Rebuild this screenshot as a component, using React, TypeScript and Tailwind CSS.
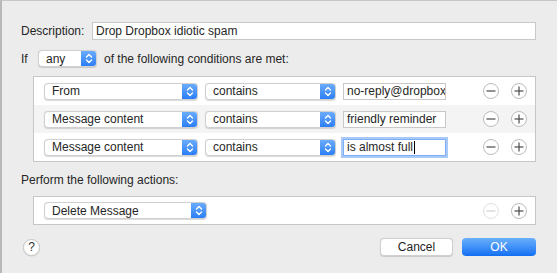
import React from "react";

const font = { fontFamily: "'Liberation Sans', Arial, sans-serif" };

function Chevrons() {
  return (
    <svg width="8" height="11" viewBox="0 0 8 11" fill="none" stroke="white" strokeWidth="1.4" strokeLinecap="round" strokeLinejoin="round">
      <path d="M1.5 4 L4 1.5 L6.5 4" />
      <path d="M1.5 7 L4 9.5 L6.5 7" />
    </svg>
  );
}

function PopUp({ label, width }: { label: string; width: string }) {
  return (
    <div className={`${width} h-[17px] flex items-stretch rounded-[4px] bg-white border border-[#d0d0d0] shadow-[0_0.5px_1px_rgba(0,0,0,0.15)] overflow-hidden`}>
      <div className="flex-1 flex items-center pl-[7px] text-[12px] text-[#262626] leading-none">{label}</div>
      <div className="w-[15px] flex items-center justify-center bg-gradient-to-b from-[#6aabfc] to-[#2a7ef6]">
        <Chevrons />
      </div>
    </div>
  );
}

function RoundBtn({ kind, disabled }: { kind: "minus" | "plus"; disabled?: boolean }) {
  const stroke = disabled ? "#d0d0d0" : "#4a4a4a";
  return (
    <div className={`w-[16px] h-[16px] rounded-full bg-white border ${disabled ? "border-[#e0e0e0]" : "border-[#bcbcbc]"} flex items-center justify-center`}>
      <svg width="10" height="10" viewBox="0 0 10 10" stroke={stroke} strokeWidth="1.2">
        <path d="M0.5 5 H9.5" />
        {kind === "plus" && <path d="M5 0.5 V9.5" />}
      </svg>
    </div>
  );
}

function Field({ value, focused }: { value: string; focused?: boolean }) {
  return (
    <div
      className={`w-[103px] h-[17px] flex items-center pl-[3px] bg-white text-[12px] text-[#262626] leading-none whitespace-nowrap overflow-hidden ${
        focused ? "border border-[#7eaef5] shadow-[0_0_0_2px_#a9c9f8]" : "border border-[#c8c8c8]"
      }`}
    >
      {value}
      {focused && <span className="inline-block w-px h-[13px] bg-black ml-px" />}
    </div>
  );
}

const conditions = [
  { field: "From", op: "contains", value: "no-reply@dropbox" },
  { field: "Message content", op: "contains", value: "friendly reminder" },
  { field: "Message content", op: "contains", value: "is almost full", focused: true },
];

export default function App() {
  return (
    <div style={font} className="w-[557px] h-[273px] bg-[#ececec] border-t border-t-[#c6c6c6] border-l-2 border-l-[#b8b8b8] text-[12px] text-[#262626] overflow-hidden">
      <div className="pl-[19px] pr-[21px] pt-[21px]">
        <div className="flex items-center h-[18px]">
          <div className="w-[71px]">Description:</div>
          <div className="flex-1 h-[18px] bg-white border border-[#c8c8c8] flex items-center pl-[3px]">Drop Dropbox idiotic spam</div>
        </div>

        <div className="flex items-center h-[17px] mt-[10px]">
          <div className="w-[17px]">If</div>
          <PopUp label="any" width="w-[59px]" />
          <div className="ml-[7px]">of the following conditions are met:</div>
        </div>

        <div className="ml-[12px] mt-[9px] bg-white border border-[#c6c6c6]">
          {conditions.map((c, i) => (
            <div key={i} className={`h-[28px] flex items-center pl-[10px] pr-[8px] ${i === 1 ? "bg-[#f4f4f4]" : "bg-white"}`}>
              <PopUp label={c.field} width="w-[154px]" />
              <div className="ml-[7px]">
                <PopUp label={c.op} width="w-[131px]" />
              </div>
              <div className="ml-[7px]">
                <Field value={c.value} focused={c.focused} />
              </div>
              <div className="ml-auto flex items-center gap-[12px]">
                <RoundBtn kind="minus" />
                <RoundBtn kind="plus" />
              </div>
            </div>
          ))}
        </div>

        <div className="mt-[11px] h-[14px] flex items-center">Perform the following actions:</div>

        <div className="ml-[12px] mt-[9px] bg-white border border-[#c6c6c6]">
          <div className="h-[27px] flex items-center pl-[10px] pr-[8px]">
            <PopUp label="Delete Message" width="w-[163px]" />
            <div className="ml-auto flex items-center gap-[12px]">
              <RoundBtn kind="minus" disabled />
              <RoundBtn kind="plus" />
            </div>
          </div>
        </div>

        <div className="mt-[13px] flex items-center">
          <div className="w-[17px] h-[17px] ml-[2px] rounded-full bg-white border border-[#c8c8c8] shadow-[0_0.5px_1px_rgba(0,0,0,0.15)] flex items-center justify-center text-[12px] leading-none text-[#333]">?</div>
          <div className="ml-auto flex items-center gap-[9px]">
            <div className="w-[73px] h-[18px] rounded-[4px] bg-white border border-[#d0d0d0] shadow-[0_0.5px_1px_rgba(0,0,0,0.15)] flex items-center justify-center">Cancel</div>
            <div className="w-[74px] h-[18px] rounded-[4px] bg-gradient-to-b from-[#69b0fb] to-[#0f6ef3] text-white flex items-center justify-center">OK</div>
          </div>
        </div>
      </div>
    </div>
  );
}
